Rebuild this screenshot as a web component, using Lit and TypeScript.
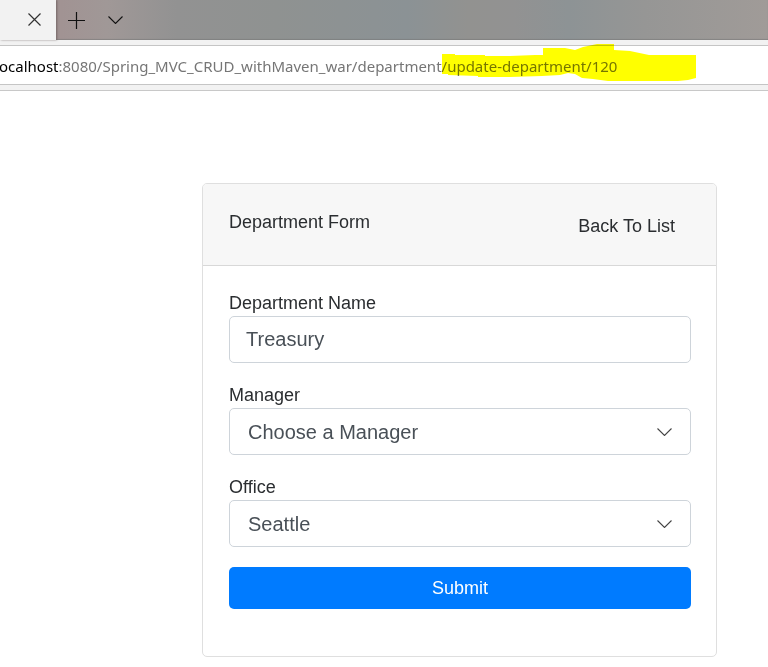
import { LitElement, html, css, svg } from "lit";
import { customElement } from "lit/decorators.js";

const chevron = svg`<path d="M0.5 0.5 L7.5 7.5 L14.5 0.5" fill="none" stroke="currentColor" stroke-width="1.1" />`;

@customElement("browser-chrome")
class BrowserChrome extends LitElement {
  static styles = css`
    :host { display: block; font-family: "Noto Sans", "Open Sans", sans-serif; }
    .tabs {
      display: flex;
      height: 40px;
      background: linear-gradient(90deg, #a19393 8%, #a09897 14%, #929292 23%, #8f9291 36%, #8b9295 53%, #929290 61%, #929292 67%, #8d9395 74%, #969695 84%, #a09b98 100%);
      box-shadow: inset 0 -1px 1px #77777799;
    }
    button { display: flex; align-items: center; justify-content: center; border: 0; padding: 0; background: none; color: #111; }
    .tab {
      display: flex;
      justify-content: flex-end;
      width: 56px;
      background: #f2f2f2;
      box-shadow: 1px 0 2px #57474799;
    }
    .close { width: 43px; height: 39px; color: #333; }
    .new { width: 41px; height: 41px; }
    .list { width: 37px; height: 39px; }
    .bar { background: #f2f2f2; padding: 5px 0; border-bottom: 1px solid #c8c8c8; }
    .address {
      height: 38px;
      display: flex;
      align-items: center;
      border: solid #c5c5c5;
      border-width: 1px 0;
      background: #fff;
      font-size: 15px;
      line-height: 20px;
      white-space: nowrap;
      color: #767676;
    }
    .url { margin: 2px 0 0 -1px; }
    .host { color: #000; }
    .marked { position: relative; }
    .ink { position: absolute; left: 0; top: -12px; mix-blend-mode: multiply; }
  `;
  render() {
    return html`
      <div class="tabs">
        <div class="tab">
          <button class="close" aria-label="Close tab">
            <svg width="13" height="13"><path d="M0.5 0.5 L12.5 12.5 M12.5 0.5 L0.5 12.5" stroke="currentColor" stroke-width="1.2" /></svg>
          </button>
        </div>
        <button class="new" aria-label="New tab">
          <svg width="17" height="17"><path d="M0 8.5 H17 M8.5 0 V17" stroke="currentColor" stroke-width="1.2" /></svg>
        </button>
        <button class="list" aria-label="Tab list"><svg width="15" height="8">${chevron}</svg></button>
      </div>
      <div class="bar">
        <div class="address" role="textbox" aria-label="Address">
          <div class="url"><span class="host">ocalhost</span>:8080/Spring_MVC_CRUD_withMaven_war/department<span class="marked">/update-department/120<svg class="ink" width="254" height="37"><path fill="#ff0" d="M0 10H13V11H43V12H68L93 11H101V4H123L133 6L141 3L155 0H172V6L188 7L207 11H254V34L246 36L236 37H166L151 35L140 34L133 30L126 29L118 31L100 32L68 33H36V32L6 31V30H0Z" /></svg></span></div>
        </div>
      </div>
    `;
  }
}

@customElement("app-root")
class AppRoot extends LitElement {
  static styles = css`
    :host {
      display: block;
      background: #fff;
      color: #2a2d30;
      font-family: "Liberation Sans", Arial, sans-serif;
      font-size: 18px;
      line-height: 26px;
    }
    main { padding: 92px 51px 10px 202px; }
    .card { border: 1px solid #dfdfdf; border-radius: 5px; overflow: hidden; }
    header {
      display: flex;
      justify-content: space-between;
      padding: 25px 41px 26px 26px;
      border-bottom: 1px solid #d8d8d8;
      background: #f7f7f7;
    }
    .title { margin: 0; font-size: 18px; font-weight: 400; }
    .back { align-self: flex-end; margin-top: 4px; color: inherit; text-decoration: none; }
    form { display: flex; flex-direction: column; gap: 20px; padding: 25px 25px 47px 26px; }
    .field { display: flex; flex-direction: column; gap: 1px; line-height: 24px; }
    input, select {
      box-sizing: border-box;
      width: 100%;
      height: 47px;
      margin: 0;
      padding: 0 16px;
      border: 1px solid #ced4da;
      border-radius: 5px;
      background: #fff;
      color: #495057;
      font: inherit;
      font-size: 20px;
    }
    .choice { display: grid; align-items: center; }
    .choice > * { grid-area: 1 / 1; }
    select { appearance: none; padding: 0 48px 0 18px; }
    .arrow { justify-self: end; margin-right: 19px; color: #444; pointer-events: none; }
    .submit {
      height: 42px;
      border: 0;
      border-radius: 5px;
      background: #007bff;
      color: #fff;
      font: inherit;
    }
  `;

  private choice(id: string, label: string, value: string) {
    return html`
      <div class="field">
        <label for=${id}>${label}</label>
        <div class="choice">
          <select id=${id}><option>${value}</option></select>
          <svg class="arrow" width="15" height="8">${chevron}</svg>
        </div>
      </div>
    `;
  }

  render() {
    return html`
      <browser-chrome></browser-chrome>
      <main>
        <section class="card">
          <header>
            <h1 class="title">Department Form</h1>
            <a class="back" href="#">Back To List</a>
          </header>
          <form>
            <div class="field">
              <label for="name">Department Name</label>
              <input id="name" type="text" value="Treasury" />
            </div>
            ${this.choice("manager", "Manager", "Choose a Manager")}
            ${this.choice("office", "Office", "Seattle")}
            <button class="submit" type="button">Submit</button>
          </form>
        </section>
      </main>
    `;
  }
}
